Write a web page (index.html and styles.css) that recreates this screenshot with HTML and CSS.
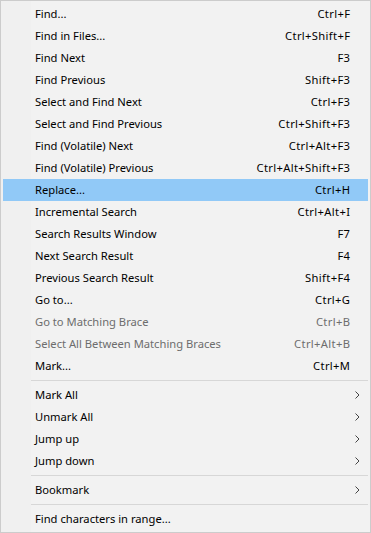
FILE: index.html
```html
<!DOCTYPE html>
<html>
<head>
<meta charset="utf-8">
<link rel="stylesheet" href="styles.css">
</head>
<body>
<div class="menu">
  <div class="item"><span class="label">Find...</span><span class="key">Ctrl+F</span></div>
  <div class="item"><span class="label">Find in Files...</span><span class="key">Ctrl+Shift+F</span></div>
  <div class="item"><span class="label">Find Next</span><span class="key">F3</span></div>
  <div class="item"><span class="label">Find Previous</span><span class="key">Shift+F3</span></div>
  <div class="item"><span class="label">Select and Find Next</span><span class="key">Ctrl+F3</span></div>
  <div class="item"><span class="label">Select and Find Previous</span><span class="key">Ctrl+Shift+F3</span></div>
  <div class="item"><span class="label">Find (Volatile) Next</span><span class="key">Ctrl+Alt+F3</span></div>
  <div class="item"><span class="label">Find (Volatile) Previous</span><span class="key">Ctrl+Alt+Shift+F3</span></div>
  <div class="item active"><span class="label">Replace...</span><span class="key">Ctrl+H</span></div>
  <div class="item"><span class="label">Incremental Search</span><span class="key">Ctrl+Alt+I</span></div>
  <div class="item"><span class="label">Search Results Window</span><span class="key">F7</span></div>
  <div class="item"><span class="label">Next Search Result</span><span class="key">F4</span></div>
  <div class="item"><span class="label">Previous Search Result</span><span class="key">Shift+F4</span></div>
  <div class="item"><span class="label">Go to...</span><span class="key">Ctrl+G</span></div>
  <div class="item disabled"><span class="label">Go to Matching Brace</span><span class="key">Ctrl+B</span></div>
  <div class="item disabled"><span class="label">Select All Between Matching Braces</span><span class="key">Ctrl+Alt+B</span></div>
  <div class="item"><span class="label">Mark...</span><span class="key">Ctrl+M</span></div>
  <div class="sep"></div>
  <div class="item sub"><span class="label">Mark All</span><svg class="arrow" width="5" height="8" viewBox="0 0 5 8"><polyline points="0.5,0.5 4,4 0.5,7.5" fill="none" stroke="#444" stroke-width="1"/></svg></div>
  <div class="item sub"><span class="label">Unmark All</span><svg class="arrow" width="5" height="8" viewBox="0 0 5 8"><polyline points="0.5,0.5 4,4 0.5,7.5" fill="none" stroke="#444" stroke-width="1"/></svg></div>
  <div class="item sub"><span class="label">Jump up</span><svg class="arrow" width="5" height="8" viewBox="0 0 5 8"><polyline points="0.5,0.5 4,4 0.5,7.5" fill="none" stroke="#444" stroke-width="1"/></svg></div>
  <div class="item sub"><span class="label">Jump down</span><svg class="arrow" width="5" height="8" viewBox="0 0 5 8"><polyline points="0.5,0.5 4,4 0.5,7.5" fill="none" stroke="#444" stroke-width="1"/></svg></div>
  <div class="sep"></div>
  <div class="item sub"><span class="label">Bookmark</span><svg class="arrow" width="5" height="8" viewBox="0 0 5 8"><polyline points="0.5,0.5 4,4 0.5,7.5" fill="none" stroke="#444" stroke-width="1"/></svg></div>
  <div class="sep"></div>
  <div class="item"><span class="label">Find characters in range...</span></div>
</div>
</body>
</html>
```
FILE: styles.css
```css
html, body {
  margin: 0;
  padding: 0;
  background: #f2f2f2;
}
.menu {
  width: 371px;
  height: 533px;
  box-sizing: border-box;
  border: 1px solid #cccccc;
  padding: 2px;
  background: linear-gradient(to right, #f0f0f0 0, #f0f0f0 30px, #f2f2f2 30px);
  font-family: "Noto Sans", "Open Sans", sans-serif;
  font-size: 11.2px;
  color: #000;
}
.item {
  height: 22px;
  display: flex;
  align-items: center;
  padding-left: 32px;
  padding-right: 18px;
  white-space: nowrap;
}
.label {
  flex: 1;
  position: relative;
  top: -1px;
}
.key {
  text-align: right;
  letter-spacing: 0.35px;
  margin-right: -0.35px;
  position: relative;
  top: -1px;
}
.item.active {
  background: #91c9f7;
}
.item.disabled {
  color: #6d6d6d;
}
.item.sub {
  padding-right: 8px;
}
.arrow {
  display: block;
}
.sep {
  height: 7px;
  display: flex;
  align-items: center;
  padding-left: 28px;
}
.sep::before {
  content: "";
  display: block;
  flex: 1;
  height: 1px;
  background: #d7d7d7;
}
```
